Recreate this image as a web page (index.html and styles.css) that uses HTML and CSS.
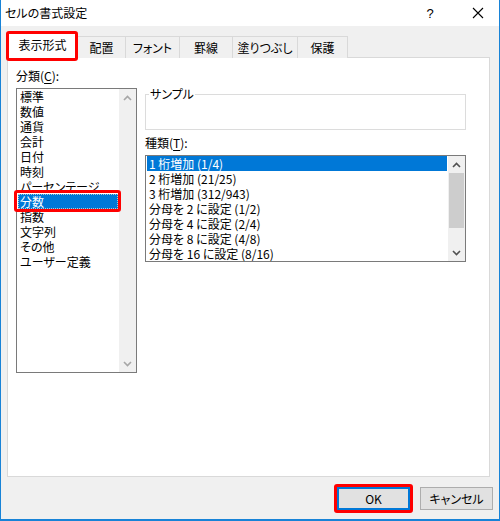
FILE: index.html
```html
<!DOCTYPE html>
<html lang="ja">
<head>
<meta charset="utf-8">
<title>セルの書式設定</title>
<link rel="stylesheet" href="styles.css">
</head>
<body>
<div class="window">
  <div class="titlebar">
    <span class="title">セルの書式設定</span>
    <span class="help">?</span>
    <span class="close">
      <svg width="12" height="12" viewBox="0 0 12 12"><path d="M1 1 L11 11 M11 1 L1 11" stroke="#000" stroke-width="1.1" fill="none"/></svg>
    </span>
  </div>
  <div class="body">
    <div class="tabs">
      <div class="tab tab-active">表示形式</div>
      <div class="tab">配置</div>
      <div class="tab">フォント</div>
      <div class="tab">罫線</div>
      <div class="tab">塗りつぶし</div>
      <div class="tab">保護</div>
    </div>
    <div class="panel">
      <div class="col-left">
        <div class="label">分類(<u>C</u>):</div>
        <div class="listbox listbox-cat">
          <div class="items">
            <div class="item">標準</div>
            <div class="item">数値</div>
            <div class="item">通貨</div>
            <div class="item">会計</div>
            <div class="item">日付</div>
            <div class="item">時刻</div>
            <div class="item">パーセンテージ</div>
            <div class="item item-sel item-marked">分数</div>
            <div class="item">指数</div>
            <div class="item">文字列</div>
            <div class="item">その他</div>
            <div class="item">ユーザー定義</div>
          </div>
          <div class="scrollbar scrollbar-disabled">
            <div class="sb-btn"><svg width="9" height="6" viewBox="0 0 9 6"><polyline points="1,5 4.5,1.5 8,5" fill="none" stroke="#a6a6a6" stroke-width="1.6"/></svg></div>
            <div class="sb-track"></div>
            <div class="sb-btn"><svg width="9" height="6" viewBox="0 0 9 6"><polyline points="1,1 4.5,4.5 8,1" fill="none" stroke="#a6a6a6" stroke-width="1.6"/></svg></div>
          </div>
        </div>
      </div>
      <div class="col-right">
        <fieldset class="sample">
          <legend>サンプル</legend>
        </fieldset>
        <div class="label label-type">種類(<u>T</u>):</div>
        <div class="listbox listbox-type">
          <div class="items">
            <div class="item item-sel">1 桁増加 (1/4)</div>
            <div class="item">2 桁増加 (21/25)</div>
            <div class="item">3 桁増加 (312/943)</div>
            <div class="item">分母を 2 に設定 (1/2)</div>
            <div class="item">分母を 4 に設定 (2/4)</div>
            <div class="item">分母を 8 に設定 (4/8)</div>
            <div class="item">分母を 16 に設定 (8/16)</div>
          </div>
          <div class="scrollbar">
            <div class="sb-btn"><svg width="9" height="6" viewBox="0 0 9 6"><polyline points="1,5 4.5,1.5 8,5" fill="none" stroke="#505050" stroke-width="1.6"/></svg></div>
            <div class="sb-track"><div class="sb-thumb"></div></div>
            <div class="sb-btn"><svg width="9" height="6" viewBox="0 0 9 6"><polyline points="1,1 4.5,4.5 8,1" fill="none" stroke="#505050" stroke-width="1.6"/></svg></div>
          </div>
        </div>
      </div>
    </div>
  </div>
  <div class="footer">
    <button class="btn btn-default btn-marked">OK</button>
    <button class="btn">キャンセル</button>
  </div>
</div>
</body>
</html>
```

FILE: styles.css
```css
html, body {
  margin: 0;
  padding: 0;
  background: #ffffff;
}
body {
  font-family: "Noto Sans CJK JP", "Noto Sans", sans-serif;
  font-size: 12px;
  color: #000;
  font-feature-settings: "palt";
}
.window {
  width: 500px;
  height: 521px;
  box-sizing: border-box;
  border-left: 1px solid #1883d7;
  border-right: 1px solid #1883d7;
  border-bottom: 2px solid #1883d7;
  background: #f0f0f0;
  display: flex;
  flex-direction: column;
}
.titlebar {
  height: 26px;
  background: #ffffff;
  display: flex;
  align-items: center;
  flex-shrink: 0;
}
.title {
  padding-left: 4px;
  flex: 1;
  line-height: 26px;
}
.help {
  width: 14px;
  text-align: center;
  font-family: "Liberation Sans", sans-serif;
  font-size: 13px;
  margin-right: 35px;
}
.close {
  width: 12px;
  height: 12px;
  margin-right: 15px;
  display: flex;
}
.body {
  padding: 0 9px 0 6px;
}
.tabs {
  margin-top: 6px;
  height: 25px;
  display: grid;
  grid-template-columns: 71px 48px 54px 53px 65px 50px;
  align-items: end;
  position: relative;
  z-index: 1;
}
.tab {
  height: 22px;
  box-sizing: border-box;
  border: 1px solid #d9d9d9;
  border-left: none;
  border-bottom: none;
  background: #f0f0f0;
  text-align: center;
  line-height: 21px;
  white-space: nowrap;
}
.tab-active {
  height: 27px;
  margin-bottom: -1px;
  background: #ffffff;
  border-left: 1px solid #d9d9d9;
  line-height: 24px;
  position: relative;
}
.tab-active::after {
  content: "";
  position: absolute;
  top: -2px;
  left: -2px;
  right: -1px;
  bottom: -2px;
  border: 3px solid #f00;
  border-radius: 3px;
}
.panel {
  height: 420px;
  box-sizing: border-box;
  background: #ffffff;
  border: 1px solid #d9d9d9;
  display: flex;
  gap: 8px;
  padding-left: 8px;
}
.label {
  line-height: 16px;
  margin-top: 10px;
  margin-bottom: 4px;
  white-space: nowrap;
}
.label u {
  text-decoration-thickness: 1px;
  text-underline-offset: 2px;
}
.listbox {
  border: 1px solid #7a7a7a;
  background: #fff;
  display: flex;
  box-sizing: border-box;
}
.listbox-cat {
  width: 121px;
  height: 285px;
}
.listbox-type {
  width: 321px;
  height: 107px;
}
.items {
  flex: 1;
  min-width: 0;
}
.item {
  line-height: 15px;
  height: 15px;
  padding-left: 2px;
  margin: 0 1px;
  white-space: nowrap;
}
.item-sel {
  background: #0078d7;
  color: #fff;
}
.listbox-cat .item-sel {
  outline: 1px dotted rgba(255, 240, 200, 0.7);
  outline-offset: -1px;
}
.item-marked {
  position: relative;
}
.item-marked::after {
  content: "";
  position: absolute;
  top: -4px;
  left: -4px;
  right: -3px;
  bottom: -3px;
  border: 3px solid #f00;
  border-radius: 3px;
}
.scrollbar {
  width: 17px;
  background: #f0f0f0;
  display: flex;
  flex-direction: column;
}
.sb-btn {
  height: 17px;
  display: flex;
  align-items: center;
  justify-content: center;
}
.sb-track {
  flex: 1;
  padding: 0 1px;
}
.sb-thumb {
  height: 55px;
  background: #cdcdcd;
}
.col-right {
  padding-top: 30px;
  width: 322px;
}
.sample {
  margin: 0;
  padding: 0;
  height: 42px;
  box-sizing: border-box;
  border: 1px solid #dcdcdc;
  width: 321px;
}
.sample legend {
  padding: 0 1px;
  margin-left: 3px;
  line-height: 12px;
}
.label-type {
  margin-top: 5px;
}
.footer {
  display: flex;
  justify-content: flex-end;
  gap: 10px;
  padding-right: 6px;
  margin-top: 10px;
}
.btn {
  font-family: inherit;
  font-size: 12px;
  font-feature-settings: "palt";
  width: 73px;
  height: 23px;
  padding: 0;
  margin: 0;
  box-sizing: border-box;
  background: #e1e1e1;
  border: 1px solid #adadad;
  color: #000;
}
.btn-default {
  border: 2px solid #0078d7;
}
.btn-marked {
  position: relative;
}
.btn-marked::after {
  content: "";
  position: absolute;
  top: -5px;
  left: -5px;
  right: -5px;
  bottom: -5px;
  border: 3px solid #f00;
  border-radius: 3px;
}
```
